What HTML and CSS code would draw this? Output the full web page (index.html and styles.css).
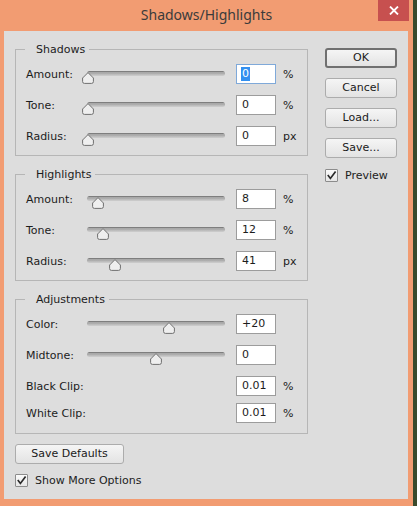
FILE: index.html
```html
<!DOCTYPE html>
<html>
<head>
<meta charset="utf-8">
<link rel="stylesheet" href="styles.css">
</head>
<body>
<div class="window">
  <div class="titlebar">
    <div class="title">Shadows/Highlights</div>
    <div class="close">
      <svg width="10" height="9" viewBox="0 0 10 9"><path d="M1 0.5 L9 8.5 M9 0.5 L1 8.5" stroke="#fff" stroke-width="1.8" fill="none"/></svg>
    </div>
  </div>
  <div class="client">
    <div class="left">
      <fieldset class="group">
        <legend>Shadows</legend>
        <div class="rows">
          <div class="row"><span class="label">Amount:</span><div class="slider"><div class="track"></div><svg class="thumb" style="left:-5px" width="12" height="12" viewBox="0 0 12 12"><path d="M6 0.6 L11.4 6 V9.6 Q11.4 11.4 9.6 11.4 H2.4 Q0.6 11.4 0.6 9.6 V6 Z" fill="#efefef" stroke="#6f6f6f"/></svg></div><div class="field focus"><span class="sel">0</span></div><span class="unit">%</span></div>
          <div class="row"><span class="label">Tone:</span><div class="slider"><div class="track"></div><svg class="thumb" style="left:-5px" width="12" height="12" viewBox="0 0 12 12"><path d="M6 0.6 L11.4 6 V9.6 Q11.4 11.4 9.6 11.4 H2.4 Q0.6 11.4 0.6 9.6 V6 Z" fill="#efefef" stroke="#6f6f6f"/></svg></div><div class="field">0</div><span class="unit">%</span></div>
          <div class="row"><span class="label">Radius:</span><div class="slider"><div class="track"></div><svg class="thumb" style="left:-5px" width="12" height="12" viewBox="0 0 12 12"><path d="M6 0.6 L11.4 6 V9.6 Q11.4 11.4 9.6 11.4 H2.4 Q0.6 11.4 0.6 9.6 V6 Z" fill="#efefef" stroke="#6f6f6f"/></svg></div><div class="field">0</div><span class="unit">px</span></div>
        </div>
      </fieldset>
      <fieldset class="group">
        <legend>Highlights</legend>
        <div class="rows">
          <div class="row"><span class="label">Amount:</span><div class="slider"><div class="track"></div><svg class="thumb" style="left:5px" width="12" height="12" viewBox="0 0 12 12"><path d="M6 0.6 L11.4 6 V9.6 Q11.4 11.4 9.6 11.4 H2.4 Q0.6 11.4 0.6 9.6 V6 Z" fill="#efefef" stroke="#6f6f6f"/></svg></div><div class="field">8</div><span class="unit">%</span></div>
          <div class="row"><span class="label">Tone:</span><div class="slider"><div class="track"></div><svg class="thumb" style="left:10px" width="12" height="12" viewBox="0 0 12 12"><path d="M6 0.6 L11.4 6 V9.6 Q11.4 11.4 9.6 11.4 H2.4 Q0.6 11.4 0.6 9.6 V6 Z" fill="#efefef" stroke="#6f6f6f"/></svg></div><div class="field">12</div><span class="unit">%</span></div>
          <div class="row"><span class="label">Radius:</span><div class="slider"><div class="track"></div><svg class="thumb" style="left:22px" width="12" height="12" viewBox="0 0 12 12"><path d="M6 0.6 L11.4 6 V9.6 Q11.4 11.4 9.6 11.4 H2.4 Q0.6 11.4 0.6 9.6 V6 Z" fill="#efefef" stroke="#6f6f6f"/></svg></div><div class="field">41</div><span class="unit">px</span></div>
        </div>
      </fieldset>
      <fieldset class="group last">
        <legend>Adjustments</legend>
        <div class="rows">
          <div class="row"><span class="label">Color:</span><div class="slider"><div class="track"></div><svg class="thumb" style="left:76px" width="12" height="12" viewBox="0 0 12 12"><path d="M6 0.6 L11.4 6 V9.6 Q11.4 11.4 9.6 11.4 H2.4 Q0.6 11.4 0.6 9.6 V6 Z" fill="#efefef" stroke="#6f6f6f"/></svg></div><div class="field">+20</div></div>
          <div class="row"><span class="label">Midtone:</span><div class="slider"><div class="track"></div><svg class="thumb" style="left:63px" width="12" height="12" viewBox="0 0 12 12"><path d="M6 0.6 L11.4 6 V9.6 Q11.4 11.4 9.6 11.4 H2.4 Q0.6 11.4 0.6 9.6 V6 Z" fill="#efefef" stroke="#6f6f6f"/></svg></div><div class="field">0</div></div>
          <div class="row"><span class="label">Black Clip:</span><div class="spacer"></div><div class="field">0.01</div><span class="unit">%</span></div>
          <div class="row tight"><span class="label">White Clip:</span><div class="spacer"></div><div class="field">0.01</div><span class="unit">%</span></div>
        </div>
      </fieldset>
      <div class="btn wide">Save Defaults</div>
      <div class="check bottom-check"><span class="box"><svg width="11" height="11" viewBox="0 0 11 11"><path d="M1.8 5 L4.4 8.4 L9.6 1.4" stroke="#2a2a2a" stroke-width="1.7" fill="none"/></svg></span><span>Show More Options</span></div>
    </div>
    <div class="right">
      <div class="btn default">OK</div>
      <div class="btn">Cancel</div>
      <div class="btn">Load...</div>
      <div class="btn">Save...</div>
      <div class="check preview"><span class="box"><svg width="11" height="11" viewBox="0 0 11 11"><path d="M1.8 5 L4.4 8.4 L9.6 1.4" stroke="#2a2a2a" stroke-width="1.7" fill="none"/></svg></span><span>Preview</span></div>
    </div>
  </div>
</div>
</body>
</html>
```

FILE: styles.css
```css
* { box-sizing: border-box; }
html, body { margin: 0; padding: 0; }
body {
  width: 417px;
  height: 506px;
  overflow: hidden;
  background: #3a4a2c;
  font-family: "DejaVu Sans", sans-serif;
  font-size: 11px;
  color: #1c1c1c;
}
.window {
  width: 413px;
  height: 506px;
  background: #f29c72;
  display: flex;
  flex-direction: column;
}
.titlebar {
  height: 31px;
  display: grid;
  grid-template-columns: 1fr auto 1fr;
  align-items: start;
}
.title {
  grid-column: 2;
  font-family: "Noto Sans", sans-serif;
  font-size: 14px;
  line-height: 30px;
  color: #3b3b3b;
}
.close {
  grid-column: 3;
  justify-self: end;
  width: 31px;
  height: 21px;
  margin-right: 4px;
  background: #c7504f;
  display: flex;
  align-items: center;
  justify-content: center;
}
.client {
  margin: 0 5px 0 4px;
  height: 468px;
  background: #dddddd;
  display: flex;
}
.left {
  width: 304px;
  padding: 11px 0 0 11px;
}
.group {
  width: 293px;
  margin: 0 0 11px 0;
  padding: 7px 0 9px 10px;
  border: 1px solid #b6b6b6;
  min-width: 0;
}
.group.last {
  margin-bottom: 10px;
  padding-bottom: 10px;
}
legend {
  margin-left: -1px;
  padding: 0 4px 0 11px;
  line-height: 15px;
  height: 15px;
}
.rows {
  display: flex;
  flex-direction: column;
  gap: 11px;
}
.row {
  display: flex;
  align-items: center;
  height: 20px;
}
.row.tight { margin-top: -4px; }
.label { width: 61px; white-space: nowrap; }
.slider {
  position: relative;
  width: 138px;
  height: 20px;
}
.spacer { width: 138px; }
.track {
  margin-top: 7px;
  height: 5px;
  border-radius: 3px;
  background: linear-gradient(#7e7e7e 0, #7e7e7e 1px, #a6a6a6 1px, #b0b0b0 3px, #c9c9c9 4px);
}
.thumb {
  position: absolute;
  top: 8px;
  display: block;
}
.field {
  width: 40px;
  height: 20px;
  margin-left: 11px;
  background: #ffffff;
  border: 1px solid #9c9c9c;
  padding-left: 5px;
  line-height: 18px;
  white-space: nowrap;
}
.field.focus { border-color: #7fa9d9; }
.sel {
  display: inline-block;
  background: #3390f0;
  color: #ffffff;
  line-height: 14px;
  padding: 0 1px;
  margin-left: -1px;
}
.unit { margin-left: 7px; }
.right {
  width: 72px;
  margin-left: 17px;
  padding-top: 17px;
  display: flex;
  flex-direction: column;
  gap: 10px;
}
.btn {
  height: 20px;
  width: 72px;
  border: 1px solid #acacac;
  border-radius: 3px;
  background: linear-gradient(#f5f5f5, #e3e3e3);
  text-align: center;
  line-height: 18px;
  color: #1a1a1a;
}
.btn.default {
  border: 2px solid #707070;
  line-height: 16px;
}
.btn.wide { width: 109px; }
.check {
  display: flex;
  align-items: center;
  gap: 7px;
  height: 13px;
}
.preview { margin-top: 1px; }
.bottom-check { margin-top: 10px; }
.box {
  width: 13px;
  height: 13px;
  border: 1px solid #8c8c8c;
  border-radius: 1px;
  background: linear-gradient(#fbfbfb, #e6e6e6);
  display: flex;
  align-items: center;
  justify-content: center;
}
.box svg { display: block; }
```
